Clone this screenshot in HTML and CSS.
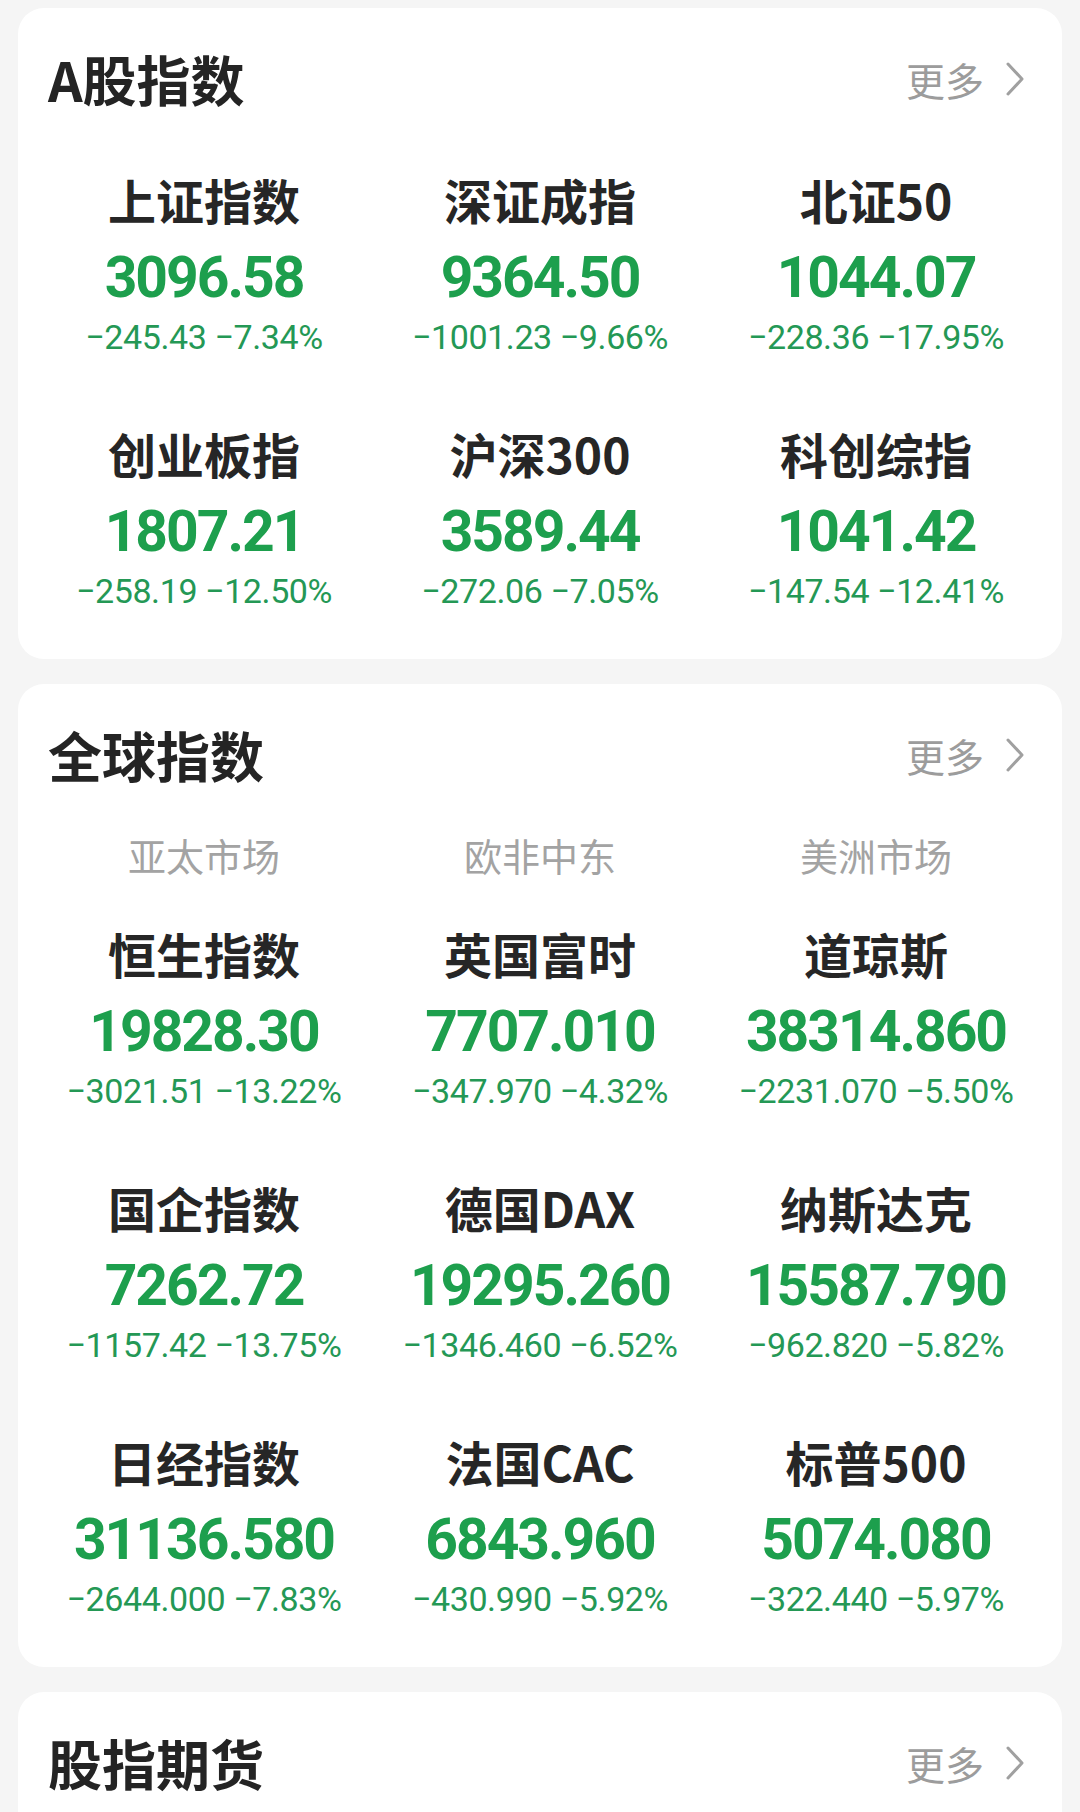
FILE: index.html
```html
<!DOCTYPE html>
<html lang="zh-CN">
<head>
<meta charset="utf-8">
<title>指数</title>
<link rel="stylesheet" href="styles.css">
</head>
<body>
<main class="page">
  <section class="card">
    <header class="card-head">
      <h2 class="card-title">A股指数</h2>
      <a class="more">更多<svg class="chev" viewBox="0 0 20 34" width="20" height="34"><path d="M3 2 L17 17 L3 32" /></svg></a>
    </header>
    <div class="grid grid-a">
      <div class="item"><div class="name">上证指数</div><div class="value">3096.58</div><div class="change">−245.43 −7.34%</div></div>
      <div class="item"><div class="name">深证成指</div><div class="value">9364.50</div><div class="change">−1001.23 −9.66%</div></div>
      <div class="item"><div class="name">北证50</div><div class="value">1044.07</div><div class="change">−228.36 −17.95%</div></div>
      <div class="item"><div class="name">创业板指</div><div class="value">1807.21</div><div class="change">−258.19 −12.50%</div></div>
      <div class="item"><div class="name">沪深300</div><div class="value">3589.44</div><div class="change">−272.06 −7.05%</div></div>
      <div class="item"><div class="name">科创综指</div><div class="value">1041.42</div><div class="change">−147.54 −12.41%</div></div>
    </div>
  </section>

  <section class="card">
    <header class="card-head">
      <h2 class="card-title">全球指数</h2>
      <a class="more">更多<svg class="chev" viewBox="0 0 20 34" width="20" height="34"><path d="M3 2 L17 17 L3 32" /></svg></a>
    </header>
    <div class="markets">
      <div class="market">亚太市场</div>
      <div class="market">欧非中东</div>
      <div class="market">美洲市场</div>
    </div>
    <div class="grid">
      <div class="item"><div class="name">恒生指数</div><div class="value">19828.30</div><div class="change">−3021.51 −13.22%</div></div>
      <div class="item"><div class="name">英国富时</div><div class="value">7707.010</div><div class="change">−347.970 −4.32%</div></div>
      <div class="item"><div class="name">道琼斯</div><div class="value">38314.860</div><div class="change">−2231.070 −5.50%</div></div>
      <div class="item"><div class="name">国企指数</div><div class="value">7262.72</div><div class="change">−1157.42 −13.75%</div></div>
      <div class="item"><div class="name">德国DAX</div><div class="value">19295.260</div><div class="change">−1346.460 −6.52%</div></div>
      <div class="item"><div class="name">纳斯达克</div><div class="value">15587.790</div><div class="change">−962.820 −5.82%</div></div>
      <div class="item"><div class="name">日经指数</div><div class="value">31136.580</div><div class="change">−2644.000 −7.83%</div></div>
      <div class="item"><div class="name">法国CAC</div><div class="value">6843.960</div><div class="change">−430.990 −5.92%</div></div>
      <div class="item"><div class="name">标普500</div><div class="value">5074.080</div><div class="change">−322.440 −5.97%</div></div>
    </div>
  </section>

  <section class="card card-last">
    <header class="card-head">
      <h2 class="card-title">股指期货</h2>
      <a class="more">更多<svg class="chev" viewBox="0 0 20 34" width="20" height="34"><path d="M3 2 L17 17 L3 32" /></svg></a>
    </header>
  </section>
</main>
</body>
</html>
```

FILE: styles.css
```css
html, body {
  margin: 0;
  padding: 0;
  background: #f5f5f5;
}

body {
  font-family: "Noto Sans CJK SC", "Noto Sans", sans-serif;
  color: #242424;
}

.page {
  display: flex;
  flex-direction: column;
  gap: 25px;
  padding: 8px 18px 0;
}

.card {
  background: #ffffff;
  border-radius: 26px;
  padding: 39px 18px 51px;
}

.card-last {
  min-height: 260px;
}

.card-head {
  display: flex;
  align-items: center;
  justify-content: space-between;
  height: 64px;
  margin: 0 19px 0 12px;
}

.card-title {
  margin: 0;
  font-size: 54px;
  line-height: 64px;
  font-weight: 700;
  color: #242424;
}

.more {
  display: flex;
  align-items: center;
  gap: 21px;
  font-size: 39px;
  line-height: 50px;
  color: #9c9c9c;
}

.chev {
  display: block;
}

.chev path {
  fill: none;
  stroke: #a0a0a0;
  stroke-width: 3;
  stroke-linecap: round;
  stroke-linejoin: round;
}

.markets {
  display: grid;
  grid-template-columns: repeat(3, 1fr);
  margin-top: 43px;
  margin-bottom: 44px;
}

.market {
  text-align: center;
  font-size: 38px;
  line-height: 50px;
  color: #a3a3a3;
}

.grid {
  display: grid;
  grid-template-columns: repeat(3, 1fr);
  row-gap: 70px;
}

.grid-a {
  margin-top: 59px;
}

.item {
  display: flex;
  flex-direction: column;
  align-items: center;
  height: 184px;
}

.name {
  font-size: 48px;
  line-height: 64px;
  height: 64px;
  font-weight: 700;
  color: #262626;
  margin-top: -3px;
  margin-bottom: 5px;
}

.value {
  font-family: Roboto, "Liberation Sans", sans-serif;
  font-size: 57px;
  line-height: 84px;
  height: 84px;
  font-weight: 700;
  letter-spacing: -2px;
  color: #1d9f4d;
  white-space: nowrap;
}

.change {
  font-family: Roboto, "Liberation Sans", sans-serif;
  font-size: 34px;
  line-height: 36px;
  height: 36px;
  margin-top: -1px;
  font-weight: 400;
  letter-spacing: -0.4px;
  color: #249855;
  white-space: nowrap;
}
```
